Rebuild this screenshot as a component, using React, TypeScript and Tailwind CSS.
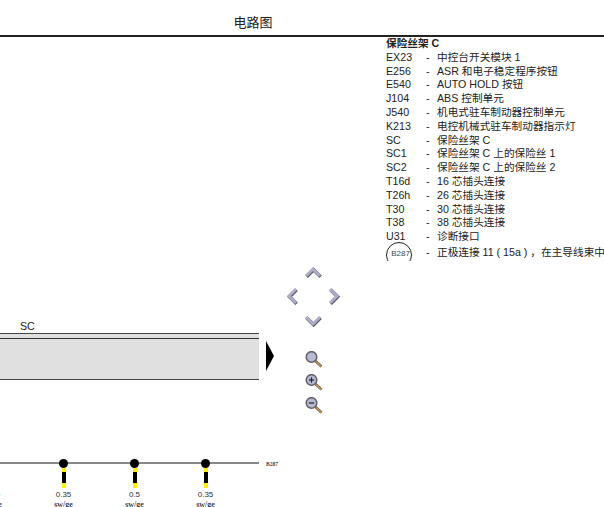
import React from "react";

const rows: [string, string][] = [
  ["EX23", "中控台开关模块 1"],
  ["E256", "ASR 和电子稳定程序按钮"],
  ["E540", "AUTO HOLD 按钮"],
  ["J104", "ABS 控制单元"],
  ["J540", "机电式驻车制动器控制单元"],
  ["K213", "电控机械式驻车制动器指示灯"],
  ["SC", "保险丝架 C"],
  ["SC1", "保险丝架 C 上的保险丝 1"],
  ["SC2", "保险丝架 C 上的保险丝 2"],
  ["T16d", "16 芯插头连接"],
  ["T26h", "26 芯插头连接"],
  ["T30", "30 芯插头连接"],
  ["T38", "38 芯插头连接"],
  ["U31", "诊断接口"],
];

const wires = [
  ["0.35", "sw/ge"],
  ["0.35", "sw/ge"],
  ["0.5", "sw/ge"],
  ["0.35", "sw/ge"],
];

function Chevron({ points }: { points: string }) {
  return (
    <svg width="18" height="18" viewBox="0 0 18 18">
      <polyline points={points} fill="none" stroke="#5c5c68" strokeWidth="3.6" transform="translate(0.6 0.8)" />
      <polyline points={points} fill="none" stroke="#adadca" strokeWidth="3" />
    </svg>
  );
}

function Magnifier({ sign }: { sign?: "+" | "-" }) {
  return (
    <svg width="18" height="17" viewBox="0 0 18 17">
      <line x1="10.5" y1="10" x2="16.5" y2="15.5" stroke="#6b5a45" strokeWidth="2.6" />
      <line x1="11" y1="10.5" x2="16.5" y2="15.5" stroke="#c9975f" strokeWidth="1.4" />
      <circle cx="6.5" cy="6" r="5.3" fill="#b9b9d4" stroke="#5e5e6a" strokeWidth="1.5" />
      {sign && <line x1="3.8" y1="6" x2="9.2" y2="6" stroke="#222" strokeWidth="1.2" />}
      {sign === "+" && <line x1="6.5" y1="3.3" x2="6.5" y2="8.7" stroke="#222" strokeWidth="1.2" />}
    </svg>
  );
}

function Wire({ size, color }: { size: string; color: string }) {
  return (
    <div className="flex w-[71px] shrink-0 flex-col items-center">
      <div className="h-[9px] w-[9px] shrink-0 rounded-full bg-black" />
      <div className="h-[4px] w-[4px] shrink-0 bg-[#ffee00]" />
      <div className="h-[11px] w-[4px] shrink-0 bg-black" />
      <div className="h-[5px] w-[4px] shrink-0 bg-[#ffee00]" />
      <div className="mt-[2px] text-[8px] leading-[10px] text-[#333]">{size}</div>
      <div className="font-['Liberation_Serif',serif] text-[8px] font-bold leading-[10px] text-[#444]">{color}</div>
    </div>
  );
}

export default function App() {
  return (
    <div className="h-[507px] w-[604px] overflow-hidden bg-white font-['Liberation_Sans','Noto_Sans_CJK_SC',sans-serif] text-[#222]">
      <header className="flex h-[37px] w-[604px] justify-center border-b-[2px] border-[#222] pr-[98px] pt-[16px] text-[13px] leading-[14px]">
        电路图
      </header>
      <div className="flex items-start">
        <section className="flex h-[470px] w-[259px] shrink-0 flex-col overflow-hidden pt-[283px]">
          <div className="shrink-0 pl-[20px] text-[10.67px] leading-[12px]">SC</div>
          <div className="mt-[1px] h-[47px] shrink-0 border-y border-y-[#444] bg-[#e0e0e0]">
            <div className="mt-[4px] border-t border-t-[#333]" />
          </div>
          <div className="relative mt-[79px] flex shrink-0">
            <div className="absolute left-0 right-0 top-[3px] h-[2px] bg-[#888]" />
            <div className="relative -ml-[43px] flex">
              {wires.map(([s, c], i) => (
                <Wire key={i} size={s} color={c} />
              ))}
            </div>
          </div>
        </section>

        <div className="flex h-[470px] w-[28px] shrink-0 flex-col pl-[7px] pt-[304px]">
          <div className="h-0 w-0 shrink-0 border-y-[15px] border-l-[8px] border-y-transparent border-l-black" />
          <div className="mt-[90px] font-['Liberation_Serif',serif] text-[5.5px] font-bold leading-[6px] text-[#444]">B287</div>
        </div>

        <nav className="flex w-[99px] shrink-0 flex-col items-start pt-[224px]">
          <div className="-ml-[4px] grid grid-cols-[20px_20px_20px] grid-rows-[23.5px_23.5px_23.5px] place-items-center">
            <div />
            <Chevron points="2,12 9,5 16,12" />
            <div />
            <Chevron points="12,2 5,9 12,16" />
            <div />
            <Chevron points="6,2 13,9 6,16" />
            <div />
            <Chevron points="2,6 9,13 16,6" />
            <div />
          </div>
          <div className="ml-[18px] mt-[19px] flex flex-col gap-[6px]">
            <Magnifier />
            <Magnifier sign="+" />
            <Magnifier sign="-" />
          </div>
        </nav>

        <aside className="w-[300px] shrink-0 whitespace-nowrap text-[10.67px] leading-[13.8px]">
          <div className="font-bold">保险丝架 C</div>
          {rows.map(([code, text]) => (
            <div key={code} className="flex">
              <span className="w-[40px] shrink-0">{code}</span>
              <span className="w-[11px] shrink-0">-</span>
              <span>{text}</span>
            </div>
          ))}
          <div className="mt-[2px] flex">
            <div className="-mt-[4px] h-[19px] w-[40px] shrink-0 overflow-hidden">
              <div className="flex h-[26px] w-[26px] items-start justify-center rounded-full border-[1.5px] border-[#222] pl-[3px] pt-[5px] text-[8px] leading-[12px] text-[#444]">B287</div>
            </div>
            <span className="w-[11px] shrink-0">-</span>
            <span>正极连接 11 ( 15a ) ，在主导线束中</span>
          </div>
        </aside>
      </div>
    </div>
  );
}
